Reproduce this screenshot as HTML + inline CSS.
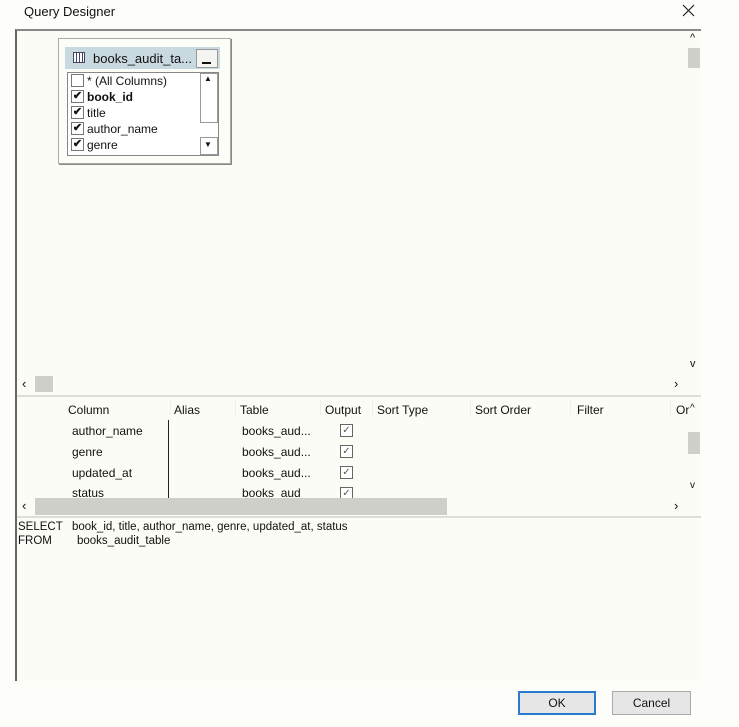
<!DOCTYPE html>
<html><head><style>
*{margin:0;padding:0;box-sizing:border-box}
body{width:739px;height:727px;background:#fdfdf9;font-family:"Liberation Sans",sans-serif;font-size:12px;color:#111;position:relative;overflow:hidden}
.a{position:absolute;white-space:nowrap}
.cb{position:absolute;width:13px;height:13px;border:1px solid #777;background:#fff;font-size:11px;line-height:11px;text-align:center;font-weight:bold}
.gc{position:absolute;width:13px;height:13px;border:1px solid #666;background:#fff;font-size:10px;line-height:11px;text-align:center;color:#555}
</style></head><body>
<div class="a" style="left:24px;top:4px;font-size:13px">Query Designer</div>
<svg class="a" style="left:682px;top:4px" width="13" height="13"><path d="M1 1L12 12M12 1L1 12" stroke="#222" stroke-width="1.2"/></svg>
<div class="a" style="left:15px;top:29px;width:686px;height:652px;border-left:2px solid #666;border-top:2px solid #888;background:#fcfcf6"></div>
<div class="a" style="left:58px;top:38px;width:173px;height:126px;border:1px solid #aaa;background:#fdfdf8;box-shadow:1px 1px 0 #888"></div>
<div class="a" style="left:65px;top:47px;width:155px;height:22px;background:#c9d9e0"></div>
<div class="a" style="left:73px;top:52px;width:12px;height:11px;border:1px solid #446;background:repeating-linear-gradient(90deg,#fff 0 2px,#446 2px 3px)"></div>
<div class="a" style="left:93px;top:51px;font-size:13px">books_audit_ta...</div>
<div class="a" style="left:196px;top:49px;width:22px;height:19px;background:#f4f4f0;border:1px solid #999"></div>
<div class="a" style="left:202px;top:62px;width:9px;height:2px;background:#111"></div>
<div class="a" style="left:67px;top:72px;width:152px;height:84px;border:1px solid #888;background:#fff"></div>
<div class="a" style="left:200px;top:73px;width:18px;height:50px;border:1px solid #999;background:#fff"></div>
<div class="a" style="left:204px;top:74px;font-size:8px">▲</div>
<div class="a" style="left:200px;top:137px;width:18px;height:18px;border:1px solid #999;background:#fff"></div>
<div class="a" style="left:204px;top:140px;font-size:8px">▼</div>
<div class="cb" style="left:71px;top:74px"></div><div class="a" style="left:87px;top:74px">* (All Columns)</div>
<div class="cb" style="left:71px;top:90px">✔</div><div class="a" style="left:87px;top:90px;font-weight:bold">book_id</div>
<div class="cb" style="left:71px;top:106px">✔</div><div class="a" style="left:87px;top:106px">title</div>
<div class="cb" style="left:71px;top:122px">✔</div><div class="a" style="left:87px;top:122px">author_name</div>
<div class="cb" style="left:71px;top:138px">✔</div><div class="a" style="left:87px;top:138px">genre</div>
<div class="a" style="left:690px;top:32px;font-size:11px">^</div>
<div class="a" style="left:688px;top:48px;width:12px;height:20px;background:#cfcfc9"></div>
<div class="a" style="left:690px;top:358px;font-size:11px">v</div>
<div class="a" style="left:22px;top:376px;font-size:13px">‹</div>
<div class="a" style="left:35px;top:376px;width:18px;height:16px;background:#cfcfc9"></div>
<div class="a" style="left:674px;top:376px;font-size:13px">›</div>
<div class="a" style="left:17px;top:395px;width:684px;height:2px;background:#ddd"></div>
<div class="a" style="left:68px;top:403px">Column</div>
<div class="a" style="left:174px;top:403px">Alias</div>
<div class="a" style="left:240px;top:403px">Table</div>
<div class="a" style="left:325px;top:403px">Output</div>
<div class="a" style="left:377px;top:403px">Sort Type</div>
<div class="a" style="left:475px;top:403px">Sort Order</div>
<div class="a" style="left:577px;top:403px">Filter</div>
<div class="a" style="left:676px;top:403px">Or</div>
<div class="a" style="left:690px;top:403px;font-size:10px">^</div>
<div class="a" style="left:170px;top:400px;width:1px;height:15px;background:#eee"></div>
<div class="a" style="left:235px;top:400px;width:1px;height:15px;background:#eee"></div>
<div class="a" style="left:320px;top:400px;width:1px;height:15px;background:#eee"></div>
<div class="a" style="left:372px;top:400px;width:1px;height:15px;background:#eee"></div>
<div class="a" style="left:470px;top:400px;width:1px;height:15px;background:#eee"></div>
<div class="a" style="left:570px;top:400px;width:1px;height:15px;background:#eee"></div>
<div class="a" style="left:670px;top:400px;width:1px;height:15px;background:#eee"></div>
<div class="a" style="left:168px;top:420px;width:1px;height:78px;background:#222"></div>
<div class="a" style="left:72px;top:424px">author_name</div><div class="a" style="left:242px;top:424px">books_aud...</div><div class="gc" style="left:340px;top:424px">✓</div>
<div class="a" style="left:72px;top:445px">genre</div><div class="a" style="left:242px;top:445px">books_aud...</div><div class="gc" style="left:340px;top:445px">✓</div>
<div class="a" style="left:72px;top:466px">updated_at</div><div class="a" style="left:242px;top:466px">books_aud...</div><div class="gc" style="left:340px;top:466px">✓</div>
<div class="a" style="left:72px;top:486px;height:12px;overflow:hidden">status</div><div class="a" style="left:242px;top:486px;height:12px;overflow:hidden">books_aud</div><div class="gc" style="left:340px;top:487px;height:11px;border-bottom:none;overflow:hidden">✓</div>
<div class="a" style="left:688px;top:432px;width:12px;height:22px;background:#cfcfc9"></div>
<div class="a" style="left:690px;top:480px;font-size:10px">v</div>
<div class="a" style="left:22px;top:498px;font-size:13px">‹</div>
<div class="a" style="left:35px;top:498px;width:412px;height:17px;background:#cfcfc9"></div>
<div class="a" style="left:674px;top:498px;font-size:13px">›</div>
<div class="a" style="left:17px;top:516px;width:684px;height:2px;background:#ddd"></div>
<div class="a" style="left:18px;top:521px;font-size:11.5px">SELECT</div>
<div class="a" style="left:72px;top:521px;font-size:11.5px">book_id, title, author_name, genre, updated_at, status</div>
<div class="a" style="left:18px;top:535px;font-size:11.5px">FROM</div>
<div class="a" style="left:77px;top:535px;font-size:11.5px">books_audit_table</div>
<div class="a" style="left:518px;top:691px;width:78px;height:24px;border:2px solid #2a7bd0;background:#e6e6e6;text-align:center;line-height:20px">OK</div>
<div class="a" style="left:612px;top:691px;width:79px;height:24px;border:1px solid #aaa;background:#e6e6e6;text-align:center;line-height:22px">Cancel</div>
</body></html>
